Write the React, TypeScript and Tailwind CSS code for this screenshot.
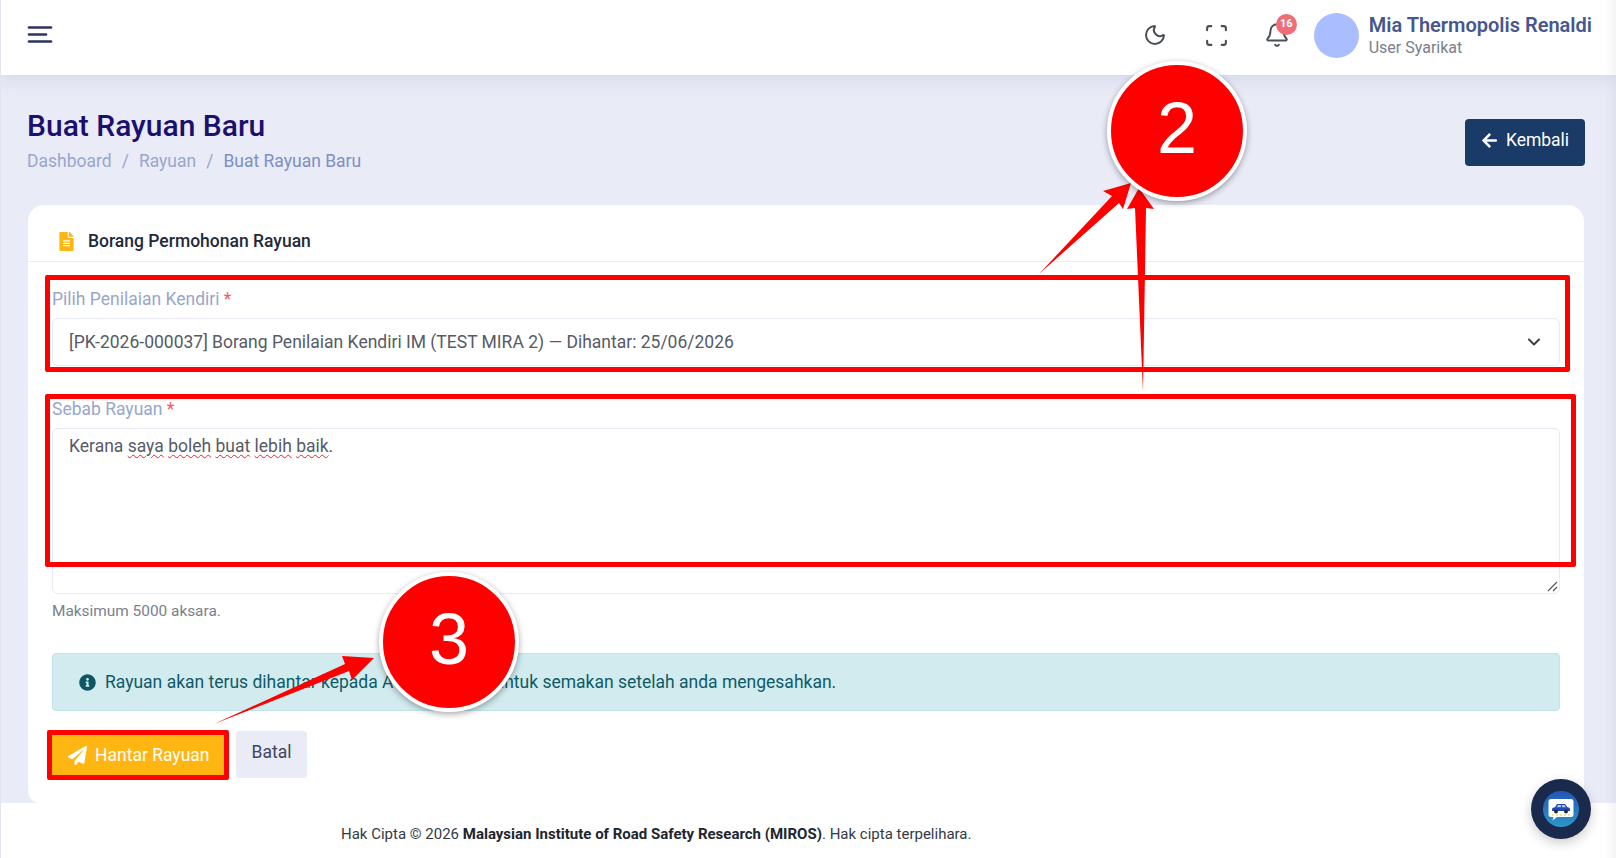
import { Bell, ChevronDown, Moon, Scan } from 'lucide-react'
import { FaArrowLeft, FaFileAlt, FaInfoCircle, FaPaperPlane } from 'react-icons/fa'

const SPELLING_ERRORS = ['saya', 'boleh', 'buat', 'lebih', 'baik']

function MenuIcon() {
  return (
    <svg width="26" height="20" viewBox="0 0 26 20" fill="none" stroke="#2c3563" strokeWidth="2.6" strokeLinecap="round">
      <path d="M2 2.500h22" />
      <path d="M2 9.500h17" />
      <path d="M2 16.500h22" />
    </svg>
  )
}

function Topbar() {
  return (
    <header className="relative z-10 flex h-[75px] shrink-0 items-center justify-between bg-white pb-[5px] pl-[27px] pr-[24px] shadow-[0_4px_16px_rgba(120,130,170,0.18)]">
      <MenuIcon />
      <div className="flex items-center">
        <Moon className="mr-[37px] h-[24px] w-[24px] text-[#4a4f57]" strokeWidth={2} />
        <Scan className="mr-[35px] h-[25px] w-[25px] text-[#4a4f57]" strokeWidth={2} />
        <div className="relative mr-[24px]">
          <Bell className="h-[26px] w-[26px] text-[#4a4f57]" strokeWidth={1.8} />
          <span className="absolute -right-[7px] -top-[8px] flex h-[21px] w-[21px] items-center justify-center rounded-full bg-[#ee6e78] text-[11px] font-bold text-white">
            16
          </span>
        </div>
        <div className="mr-[10px] h-[45px] w-[45px] rounded-full bg-[#aabdff]" />
        <div className="flex flex-col">
          <span className="text-[20px] font-semibold leading-[24px] text-[#46578d]">Mia Thermopolis Renaldi</span>
          <span className="mt-[1px] text-[16px] leading-[20px] text-[#7a808c]">User Syarikat</span>
        </div>
      </div>
    </header>
  )
}

function PageHeading() {
  return (
    <div className="flex h-[130px] items-start justify-between pl-[27px] pr-[31px]">
      <div className="pt-[32px]">
        <h1 className="text-[30px] font-medium leading-[38px] text-[#1b0f6f]">Buat Rayuan Baru</h1>
        <div className="mt-[4px] flex items-center text-[17.5px] leading-[24px] text-[#9aa7cd]">
          <span>Dashboard</span>
          <span className="mx-[10px]">/</span>
          <span>Rayuan</span>
          <span className="mx-[10px]">/</span>
          <span className="text-[#7e8fc4]">Buat Rayuan Baru</span>
        </div>
      </div>
      <button className="mt-[44px] flex h-[47px] w-[120px] items-center justify-center gap-[8px] rounded bg-[#1a3a68] pb-[4px] text-[17.5px] text-white">
        <FaArrowLeft className="h-[17px] w-[17px]" />
        Kembali
      </button>
    </div>
  )
}

function FieldLabel({ text }: { text: string }) {
  return (
    <label className="block h-[24px] text-[17.5px] leading-[24px] text-[#98a6cc]">
      {text} <span className="text-[#ef5a6a]">*</span>
    </label>
  )
}

function ReasonField() {
  return (
    <div className="relative mt-[7px] h-[166px] rounded-[6px] border border-[#e8e8f6] bg-white py-[5px] pl-[16px] pr-[15px] text-[17.5px] leading-[24px] text-[#565b66]">
      Kerana{' '}
      {SPELLING_ERRORS.map((word, i) => (
        <span key={word}>
          <span className="underline decoration-[#e5262b] decoration-wavy decoration-1 underline-offset-2">{word}</span>
          {i < SPELLING_ERRORS.length - 1 ? ' ' : '.'}
        </span>
      ))}
      {/* resize handle */}
      <svg className="absolute bottom-[1px] right-[1px]" width="12" height="12" viewBox="0 0 12 12" stroke="#555" strokeWidth="1.2">
        <path d="M2 11 11 2M7 11l4-4" />
      </svg>
    </div>
  )
}

function FormCard() {
  return (
    <section className="ml-[28px] mr-[32px] h-[598px] rounded-t-[16px] rounded-b-[12px] bg-white">
      <div className="flex h-[57px] items-center border-b border-[#e9ebf5] pl-[29px] pt-[17px]">
        <FaFileAlt className="h-[19px] w-[19px] text-[#ffb612]" />
        <h2 className="ml-[12px] text-[17.5px] font-medium text-[#1f2a3a]">Borang Permohonan Rayuan</h2>
      </div>

      <div className="px-[24px] pt-[25px]">
        <FieldLabel text="Pilih Penilaian Kendiri" />
        <div className="mt-[7px] flex h-[48px] items-center justify-between rounded-[6px] border border-[#e8e8f6] pl-[16px] pr-[15px] text-[17.5px] text-[#565b66]">
          <span>[PK-2026-000037] Borang Penilaian Kendiri IM (TEST MIRA 2) — Dihantar: 25/06/2026</span>
          <ChevronDown className="h-[20px] w-[20px] text-[#3a3f48]" strokeWidth={2.4} />
        </div>

        <div className="mt-[31px]">
          <FieldLabel text="Sebab Rayuan" />
          <ReasonField />
        </div>
        <p className="mt-[7px] h-[20px] text-[15.4px] leading-[20px] text-[#7a808c]">Maksimum 5000 aksara.</p>

        <div className="mt-[32px] flex h-[58px] items-center rounded border border-[#bee5eb] bg-[#d1ebef] pl-[26px] text-[17.5px] text-[#0f5a66]">
          <FaInfoCircle className="h-[17px] w-[17px] text-[#0f5563]" />
          <span className="ml-[9px]">Rayuan akan terus dihantar kepada Admin MIROS untuk semakan setelah anda mengesahkan.</span>
        </div>

        <div className="mt-[20px] flex gap-[10px]">
          <button className="flex h-[47px] w-[174px] items-center gap-[8px] rounded bg-[#ffb612] pl-[16px] pt-[2px] text-[17.5px] text-white">
            <FaPaperPlane className="h-[19px] w-[19px]" />
            Hantar Rayuan
          </button>
          <button className="h-[47px] w-[71px] rounded bg-[#e9ebf7] pb-[4px] text-[17.5px] text-[#3d4560]">Batal</button>
        </div>
      </div>
    </section>
  )
}

function Footer() {
  return (
    <footer className="flex h-[55px] shrink-0 items-center bg-white pl-[341px] pt-[8px] text-[15px] text-[#333a45]">
      <span>
        Hak Cipta © 2026 <strong className="font-bold text-[#20262e]">Malaysian Institute of Road Safety Research (MIROS)</strong>. Hak cipta terpelihara.
      </span>
    </footer>
  )
}

function ChatButton() {
  return (
    <button className="absolute left-[1531px] top-[779px] flex h-[60px] w-[60px] items-center justify-center rounded-full bg-[#1a2a4c] shadow-[0_4px_12px_rgba(0,0,0,0.2)]">
      <svg width="36" height="36" viewBox="0 0 36 36">
        <defs>
          <linearGradient id="chatBg" x1="0" y1="0" x2="0" y2="1">
            <stop offset="0" stopColor="#2355b8" />
            <stop offset="1" stopColor="#2b97c9" />
          </linearGradient>
        </defs>
        <circle cx="18" cy="18" r="18" fill="url(#chatBg)" />
        <path d="M8 8h20a2.500 2.500 0 0 1 2.500 2.500v13A2.500 2.500 0 0 1 28 26H14l-4.500 3.500 1-3.500H8a2.500 2.500 0 0 1-2.500-2.500v-13A2.500 2.500 0 0 1 8 8z" fill="#fff" />
        <path d="M9 18.500c0-1.500 1-2 3-2.300l2-3.200h8l2.500 3.200c2 .3 2.500 1 2.500 2.300v1.500H9z" fill="#2348b0" />
        <path d="M15 14h3v2.300h-4.300zM19 14h2.500l1.500 2.300h-4z" fill="#a9c8f5" />
        <circle cx="13" cy="20.500" r="2" fill="#222b45" />
        <circle cx="23" cy="20.500" r="2" fill="#222b45" />
        <path d="M9 24h18" stroke="#f4c430" strokeWidth="1" strokeDasharray="2 2" />
      </svg>
    </button>
  )
}

function NumberBadge({ value, className }: { value: string; className: string }) {
  return (
    <div
      className={`absolute flex h-[140px] w-[140px] items-center justify-center rounded-full border-[4px] border-white bg-[#ff0000] pb-[6px] font-['Liberation_Sans',sans-serif] text-[72px] text-white shadow-[0_2px_6px_rgba(0,0,0,0.35)] ${className}`}
    >
      {value}
    </div>
  )
}

// Red callouts drawn on top of the page
function Annotations() {
  return (
    <div className="absolute inset-0 z-20">
      <div className="absolute left-[45px] top-[275px] h-[97px] w-[1525px] rounded-[2px] border-[5px] border-[#ff0000]" />
      <div className="absolute left-[45px] top-[394px] h-[173px] w-[1531px] rounded-[2px] border-[5px] border-[#ff0000]" />
      <div className="absolute left-[47px] top-[730px] h-[50px] w-[182px] rounded-[2px] border-[5px] border-[#ff0000]" />
      <svg className="absolute left-0 top-0" width="1616" height="858" fill="#ff0000">
        <polygon points="1039,274 1112,196 1103,191 1131,183 1123,209 1119,203" />
        <polygon points="1143,392 1135,208 1127,209 1139,188 1154,209 1146,208" />
        <polygon points="214,724 345,664 342,656 374,658 352,680 349,671" />
      </svg>
      <NumberBadge value="2" className="left-[1107px] top-[61px]" />
      <NumberBadge value="3" className="left-[379px] top-[572px]" />
    </div>
  )
}

export default function App() {
  return (
    <div className="relative flex h-[858px] w-[1616px] flex-col overflow-hidden bg-white font-['Roboto',sans-serif]">
      <Topbar />
      <main className="flex-1 bg-[#e9ebf7]">
        <PageHeading />
        <FormCard />
      </main>
      <Footer />
      <ChatButton />
      <Annotations />
      {/* page edges */}
      <div className="absolute inset-y-0 left-0 z-20 w-px bg-[#e2e4ee]" />
      <div className="absolute inset-y-0 right-0 z-20 w-[12px] bg-gradient-to-r from-transparent to-black/[0.04]" />
    </div>
  )
}
